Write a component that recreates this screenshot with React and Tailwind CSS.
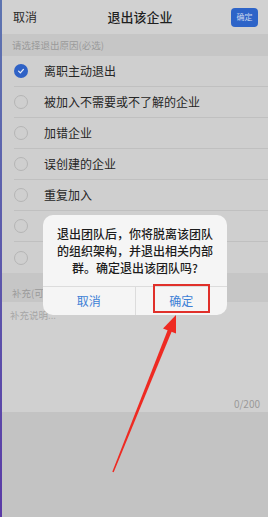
import React from "react";

const reasons = [
  "离职主动退出",
  "被加入不需要或不了解的企业",
  "加错企业",
  "误创建的企业",
  "重复加入",
  "",
  "",
];

function Radio({ checked }) {
  if (checked) {
    return (
      <div className="w-[14px] h-[14px] rounded-full bg-[#2f62c6] flex items-center justify-center">
        <svg width="8" height="8" viewBox="0 0 10 10">
          <path d="M2 5.2 L4.2 7.3 L8 3" stroke="#e8eefa" strokeWidth="1.6" fill="none" strokeLinecap="round" strokeLinejoin="round" />
        </svg>
      </div>
    );
  }
  return <div className="w-[14px] h-[14px] rounded-full border border-[#b5b5b5]" />;
}

export default function App() {
  return (
    <div
      className="relative w-[268px] h-[517px] overflow-hidden bg-[#c3c3c3] flex"
      style={{ fontFamily: '"Noto Sans CJK SC", "Noto Sans", sans-serif' }}
    >
      <div className="w-[2px] shrink-0 bg-gradient-to-b from-[#5d74b0] to-[#5a3aa6]" />
      <div className="flex-1 flex flex-col">
        {/* header */}
        <div className="h-[34px] bg-[#d1d1d1] flex items-center justify-between pl-[11px] pr-[10px]">
          <span className="text-[12px] text-[#2a2a2a]">取消</span>
          <span className="text-[13px] text-[#1f1f1f] font-medium ml-[12px]">退出该企业</span>
          <div className="w-[27px] h-[19px] rounded-[4px] bg-[#2d64c8] flex items-center justify-center text-[8px] text-[#c9d6ee]">
            确定
          </div>
        </div>
        <div className="h-[22px] bg-[#c6c6c6] flex items-center pl-[10px] text-[9.5px] text-[#9a9a9a]">
          请选择退出原因(必选)
        </div>
        <div className="bg-[#cfcfcf]">
          {reasons.map((r, i) => (
            <div key={i} className="h-[31px] flex items-center border-b border-[#c0c0c0] last:border-b-0 ml-[12px]">
              <Radio checked={i === 0} />
              <span className="ml-[16px] text-[12px] text-[#262626]">{r}</span>
            </div>
          ))}
        </div>
        <div className="h-[29px] bg-[#c6c6c6] flex items-end pb-[2px] pl-[10px] text-[9.5px] text-[#9a9a9a]">
          补充(可选)
        </div>
        <div className="h-[110px] bg-[#d0d0d0] flex flex-col justify-between px-[8px] pt-[6px] pb-[1px]">
          <span className="text-[9.5px] text-[#a6a6a6]">补充说明...</span>
          <span className="self-end text-[10px] text-[#9a9a9a]">0/200</span>
        </div>
        <div className="flex-1 bg-[#c3c3c3]" />
      </div>

      {/* dialog */}
      <div className="absolute left-[43px] top-[215px] w-[184px] h-[100px] rounded-[10px] bg-[#f5f5f5] flex flex-col">
        <div className="h-[71px] flex items-center justify-center px-[12px] text-center text-[12px] leading-[17px] text-[#1c1c1c] font-medium">
          退出团队后，你将脱离该团队的组织架构，并退出相关内部群。确定退出该团队吗?
        </div>
        <div className="flex-1 flex border-t border-[#dcdcdc]">
          <div className="flex-1 flex items-center justify-center text-[12px] text-[#3d7fd6]">取消</div>
          <div className="w-px bg-[#dcdcdc]" />
          <div className="flex-1 flex items-center justify-center text-[12px] text-[#3d7fd6]">确定</div>
        </div>
      </div>

      {/* annotation */}
      <div className="absolute left-[153px] top-[284px] w-[57px] h-[29px] border-2 border-[#e0302a]" />
      <svg className="absolute left-0 top-0" width="268" height="517" viewBox="0 0 268 517">
        <polygon points="112.3,471.7 113.7,472.3 172,330.8 168,329.2" fill="#ee2a22" />
        <polygon points="176,315 176,333.6 163,328.4" fill="#ee2a22" />
      </svg>
    </div>
  );
}
